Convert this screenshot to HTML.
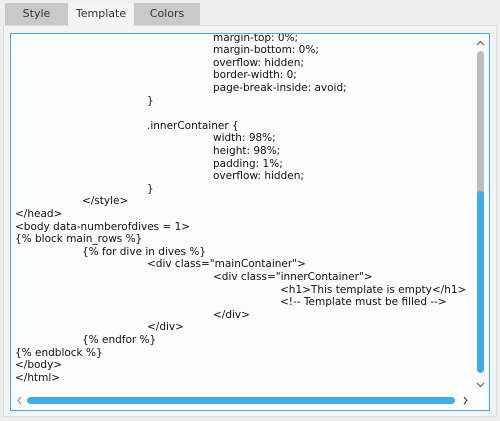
<!DOCTYPE html>
<html><head><style>
body{margin:0;width:500px;height:421px;background:#efefef;position:relative;overflow:hidden;font-family:"DejaVu Sans","Liberation Sans",sans-serif;}
.tab{position:absolute;top:3px;height:22px;font-size:11px;color:#333;text-align:center;line-height:22px;}
.panel{position:absolute;left:3px;top:25px;width:494px;height:392px;background:#f4f4f4;border:1px solid #dcdcdc;box-sizing:border-box;}
.ta{position:absolute;left:10px;top:33px;width:480px;height:378px;border:1px solid #3daee9;background:#fcfcfc;box-sizing:border-box;overflow:hidden;}
.in{position:absolute;left:0;top:-1.5px;}
.l{position:absolute;font-size:10.5px;color:#111;white-space:pre;line-height:12px;}
</style></head><body>
<div class="tab" style="left:5px;width:63px;background:#c9c9c9;">Style</div>
<div class="tab" style="left:69px;width:64px;background:#f4f4f4;top:3px;height:23px;z-index:2;">Template</div>
<div class="tab" style="left:134px;width:66px;background:#c9c9c9;">Colors</div>
<div class="panel"></div>
<div class="ta"><div class="in">
<div class="l" style="left:202px;top:-1px">margin-top: 0%;</div>
<div class="l" style="left:202px;top:11.6px">margin-bottom: 0%;</div>
<div class="l" style="left:202px;top:24.2px">overflow: hidden;</div>
<div class="l" style="left:202px;top:36.8px">border-width: 0;</div>
<div class="l" style="left:202px;top:49.4px">page-break-inside: avoid;</div>
<div class="l" style="left:136px;top:62px">}</div>
<div class="l" style="left:136px;top:87.2px">.innerContainer {</div>
<div class="l" style="left:202px;top:99.8px">width: 98%;</div>
<div class="l" style="left:202px;top:112.4px">height: 98%;</div>
<div class="l" style="left:202px;top:125px">padding: 1%;</div>
<div class="l" style="left:202px;top:137.6px">overflow: hidden;</div>
<div class="l" style="left:136px;top:150.2px">}</div>
<div class="l" style="left:71px;top:162.8px">&lt;/style&gt;</div>
<div class="l" style="left:4px;top:175.4px">&lt;/head&gt;</div>
<div class="l" style="left:4px;top:188px">&lt;body data-numberofdives = 1&gt;</div>
<div class="l" style="left:4px;top:200.6px">{% block main_rows %}</div>
<div class="l" style="left:71px;top:213.2px">{% for dive in dives %}</div>
<div class="l" style="left:136px;top:225.8px">&lt;div class="mainContainer"&gt;</div>
<div class="l" style="left:202px;top:238.4px">&lt;div class="innerContainer"&gt;</div>
<div class="l" style="left:269px;top:251px">&lt;h1&gt;This template is empty&lt;/h1&gt;</div>
<div class="l" style="left:269px;top:263.6px">&lt;!-- Template must be filled --&gt;</div>
<div class="l" style="left:202px;top:276.2px">&lt;/div&gt;</div>
<div class="l" style="left:136px;top:288.8px">&lt;/div&gt;</div>
<div class="l" style="left:71px;top:301.4px">{% endfor %}</div>
<div class="l" style="left:4px;top:314px">{% endblock %}</div>
<div class="l" style="left:4px;top:326.6px">&lt;/body&gt;</div>
<div class="l" style="left:4px;top:339.2px">&lt;/html&gt;</div>
</div></div>
<svg style="position:absolute;left:0;top:0" width="500" height="421">
<path d="M477 45 L480.5 41.5 L484 45" fill="none" stroke="#555" stroke-width="1"/>
<rect x="477" y="51" width="7" height="145" rx="3.5" fill="#bdbdbd"/>
<rect x="477" y="191" width="7" height="182" rx="3.5" fill="#3daee9"/>
<path d="M477 383 L480.5 386.5 L484 383" fill="none" stroke="#555" stroke-width="1"/>
<path d="M21 397 L18 400.5 L21 404" fill="none" stroke="#888" stroke-width="1"/>
<rect x="27" y="397" width="428" height="7" rx="3.5" fill="#3daee9"/>
<path d="M464 397 L467 400.5 L464 404" fill="none" stroke="#333" stroke-width="1"/>
</svg>
</body></html>
